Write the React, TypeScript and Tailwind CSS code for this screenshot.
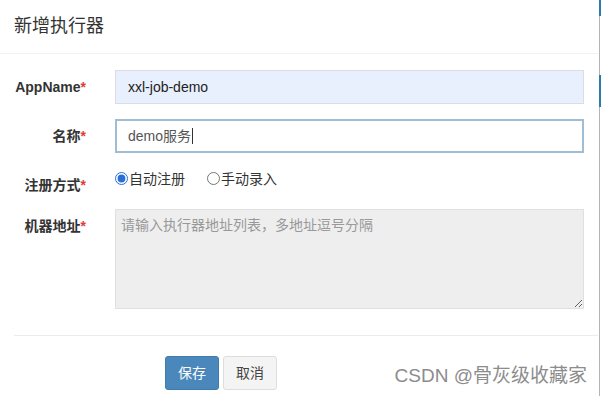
const font = { fontFamily: '"Liberation Sans", "Noto Sans CJK SC", sans-serif' };

function Label({ text }: { text: string }) {
  return (
    <label className="w-[86px] shrink-0 pt-[7px] text-right text-[14px] leading-5 font-bold text-[#333]">
      {text}
      <span className="text-[#e53935]">*</span>
    </label>
  );
}

function Radio({ checked, text }: { checked?: boolean; text: string }) {
  return (
    <label className="flex items-center text-[14px] leading-5 text-[#333]">
      <input
        type="radio"
        name="addressType"
        defaultChecked={checked}
        className="m-0 h-[13px] w-[13px] accent-[#2a6fd6]"
      />
      <span className="ml-px">{text}</span>
    </label>
  );
}

export default function App() {
  return (
    <div className="flex h-[396px] w-[601px] bg-white" style={font}>
      <div className="flex min-w-0 flex-1 flex-col">
        {/* Header */}
        <div className="flex h-[54px] shrink-0 items-center border-b border-[#f2f2f2] pl-[14px]">
          <h4 className="text-[18px] text-[#333]">新增执行器</h4>
        </div>

        {/* Body */}
        <div className="flex flex-col gap-[15px] pt-[16px] pr-[14px]">
          <div className="flex">
            <Label text="AppName" />
            <div className="ml-[29px] flex h-[34px] flex-1 items-center border border-[#dcdde3] bg-[#e8f0fe] px-[12px] text-[14px] text-[#222]">
              xxl-job-demo
            </div>
          </div>

          <div className="flex">
            <Label text="名称" />
            <div className="ml-[29px] flex h-[34px] flex-1 items-center border-2 border-[#a0bdd6] px-[11px] text-[14px] text-[#555]">
              demo服务
              <span className="ml-px inline-block h-[16px] w-px bg-[#333]" />
            </div>
          </div>

          <div className="flex h-[26px]">
            <Label text="注册方式" />
            <div className="ml-[29px] flex h-[20px] items-center gap-[22px] pt-px">
              <Radio checked text="自动注册" />
              <Radio text="手动录入" />
            </div>
          </div>

          <div className="flex">
            <Label text="机器地址" />
            <textarea
              placeholder="请输入执行器地址列表，多地址逗号分隔"
              className="ml-[29px] h-[100px] flex-1 border border-[#e0e0e0] bg-[#eeeeee] px-[5px] pt-[5px] text-[14px] leading-5 text-[#555] outline-none placeholder:text-[#999]"
            />
          </div>
        </div>

        {/* Footer */}
        <div className="mt-[26px] ml-[14px] border-t border-[#ececec]" />
        <div className="flex items-start pt-[20px] pr-[11px]">
          <button className="ml-[165px] h-[34px] w-[54px] rounded-[3px] border border-[#3f7bad] bg-[#4a87bb] text-[14px] text-white">
            保存
          </button>
          <button className="ml-[4px] h-[34px] w-[54px] rounded-[3px] border border-[#dddddd] bg-[#f4f4f4] text-[14px] text-[#444]">
            取消
          </button>
          <div className="mt-[8px] ml-auto text-[19px] leading-6 text-[#8c8c8c]">
            CSDN @骨灰级收藏家
          </div>
        </div>
      </div>

      {/* Right edge strip */}
      <div className="flex w-[3px] shrink-0 flex-col pl-px">
        <div className="h-[16px] w-[2px] bg-[#2d7bae]" />
        <div className="h-[59px] w-[1px] bg-[#b4b4b4]" />
        <div className="h-[32px] w-[2px] bg-[#2d7bae]" />
        <div className="w-[1px] flex-1 bg-[#b4b4b4]" />
      </div>
    </div>
  );
}
